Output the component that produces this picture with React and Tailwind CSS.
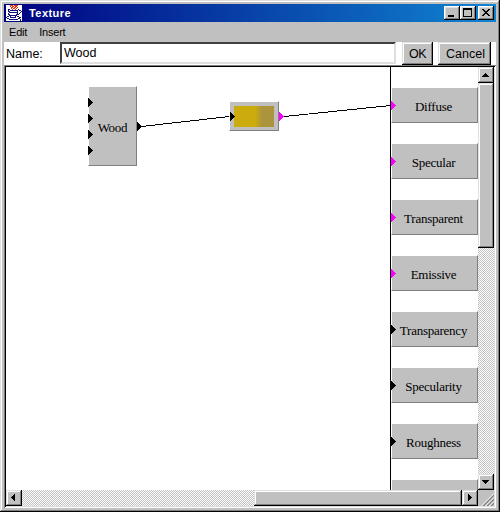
import React from "react";

const SANS = "font-['Liberation_Sans',Arial,sans-serif]";
const SERIF = "font-['Liberation_Serif','Times_New_Roman',serif]";
const RAISED =
  "bg-[#c0c0c0] shadow-[inset_-1px_-1px_#000,inset_1px_1px_#dfdfdf,inset_-2px_-2px_#808080,inset_2px_2px_#fff]";
const CAPTION =
  "bg-[#c0c0c0] shadow-[inset_-1px_-1px_#000,inset_1px_1px_#fff,inset_-2px_-2px_#808080,inset_2px_2px_#dfdfdf]";
const DITHER = "bg-[repeating-conic-gradient(#c0c0c0_0_25%,#fff_0_50%)] bg-[length:2px_2px]";

// One character per pixel on a white tile: r = steam, b = cup outline
const CUP = [
  "....rrr.rrrr....",
  "....r.rr.rr.....",
  ".....rr.rr.r....",
  ".....r.rr.r.....",
  "..bb..r..r..b...",
  "..b.bbbbbbbb.bb.",
  "..bb.......b...b",
  "...bbbbbbbbb..b.",
  "..b........b.b..",
  "..bb......bbb...",
  "...bbbbbbbb.....",
  ".bb.b....b.bb...",
  "b...bbbbbb...bb.",
  ".bb.........bb..",
  "...bbbbbbbbb..b.",
  "..............b.",
];
const INK = { r: "#e83018", b: "#101080" };

function JavaIcon() {
  return (
    <svg className="bg-white" width="16" height="16" viewBox="0 0 16 16" shapeRendering="crispEdges">
      {CUP.flatMap((row, y) =>
        [...row].map((c, x) =>
          INK[c] ? <rect key={`${x}-${y}`} x={x} y={y} width="1" height="1" fill={INK[c]} /> : null
        )
      )}
    </svg>
  );
}

const ARROWS = {
  up: "M7 6h1v1h1v1h1v1h1v1H4V9h1V8h1V7h1z",
  down: "M4 6h7v1h-1v1H9v1H8v1H7V9H6V8H5V7H4z",
  left: "M9 4v7H8v-1H7V9H6V8H5V7h1V6h1V5h1V4z",
  right: "M6 4v7h1v-1h1V9h1V8h1V7H9V6H8V5H7V4z",
};

function ScrollButton({ dir }) {
  return (
    <button className={`block size-4 shrink-0 ${RAISED}`}>
      <svg width="16" height="16" shapeRendering="crispEdges">
        <path d={ARROWS[dir]} />
      </svg>
    </button>
  );
}

function CaptionButton({ path, className = "" }) {
  return (
    <button className={`h-3.5 w-4 ${CAPTION} ${className}`}>
      <svg width="16" height="14" shapeRendering="crispEdges">
        <path d={path} fillRule="evenodd" />
      </svg>
    </button>
  );
}

function Port({ className, color = "#000" }) {
  return (
    <svg className={`absolute ${className}`} width="5" height="9" viewBox="0 0 5 9" shapeRendering="crispEdges">
      <path d="M0 0h1v1h1v1h1v1h1v1h1v1h-1v1h-1v1h-1v1h-1v1h-1z" fill={color} />
    </svg>
  );
}

const NODE = "border border-t-white border-l-white border-r-[#808080] border-b-[#808080] bg-[#c0c0c0]";

const OUTPUTS = [
  ["Diffuse", "#ff00ff", "top-5"],
  ["Specular", "#ff00ff", "top-[76px]"],
  ["Transparent", "#ff00ff", "top-[132px]"],
  ["Emissive", "#ff00ff", "top-[188px]"],
  ["Transparency", "#000", "top-[244px]"],
  ["Specularity", "#000", "top-[300px]"],
  ["Roughness", "#000", "top-[356px]"],
  ["", "#000", "top-[412px]"],
];

function Canvas() {
  return (
    <div className={`relative min-w-0 flex-1 overflow-hidden bg-white text-[13px] tracking-[-0.25px] ${SERIF}`}>
      <svg className="absolute inset-0" width="472" height="423" shapeRendering="crispEdges">
        <path d="M384.5 0V423M135.5 59.5L223.5 49.5M278.5 49.5L384.5 38.5" stroke="#000" fill="none" />
      </svg>
      <div className={`absolute top-[19px] left-[82px] flex h-20 w-[49px] items-center justify-center pt-1 ${NODE}`}>
        Wood
      </div>
      <Port className="top-[31px] left-[82px]" />
      <Port className="top-[47px] left-[82px]" />
      <Port className="top-[63px] left-[82px]" />
      <Port className="top-[79px] left-[82px]" />
      <Port className="top-[55px] left-[131px]" />
      <div className={`absolute top-[34px] left-[223px] h-[30px] w-[50px] p-1 ${NODE}`}>
        <div className="h-[21px] w-10 bg-[linear-gradient(90deg,#ccac0c_0_53%,#ac943c_70%)]" />
      </div>
      <Port className="top-[45px] left-[224px]" />
      <Port className="top-[45px] left-[273px]" color="#ff00ff" />
      {OUTPUTS.map(([label, color, top]) => (
        <div key={top} className={`absolute left-[385px] h-9 w-[87px] ${top}`}>
          <div className={`flex h-full items-center justify-center pt-1 pr-0.5 ${NODE}`}>{label}</div>
          <Port className="top-3.5 left-0" color={color} />
        </div>
      ))}
    </div>
  );
}

export default function App() {
  return (
    <div
      className={`h-[512px] w-[500px] overflow-hidden bg-[#c0c0c0] p-1 text-[11px] text-black shadow-[inset_-1px_-1px_#000,inset_1px_1px_#dfdfdf,inset_-2px_-2px_#808080,inset_2px_2px_#fff] ${SANS}`}
    >
      <div className="flex h-[18px] items-center bg-[linear-gradient(90deg,#000080,#1084d0)] pr-0.5 pl-0.5">
        <JavaIcon />
        <span className="ml-[7px] flex-1 text-[11px] font-bold tracking-[0.45px] text-white">Texture</span>
        <CaptionButton path="M4 9h6v2H4z" />
        <CaptionButton path="M3 2h9v9H3zM4 4v6h7V4z" />
        <CaptionButton
          className="ml-0.5"
          path="M4 3h2v1h1v1h2V4h1V3h2v1h-1v1h-1v1H9v1h1v1h1v1h1v1h-2V9H9V8H7v1H6v1H4V9h1V8h1V7h1V6H6V5H5V4H4z"
        />
      </div>
      <div className="flex h-5 items-center gap-3 pl-[5px] tracking-[-0.2px]">
        <span>Edit</span>
        <span>Insert</span>
      </div>
      <div className="flex h-[23px] bg-white text-[13px] leading-[23px]">
        <span className="w-14 pt-px pl-0.5 text-[12.5px]">Name:</span>
        <div className="h-[22px] w-[336px] border-2 border-t-[#404040] border-r-[#dfdfdf] border-b-[#dfdfdf] border-l-[#404040] pl-0.5 text-[12.5px] leading-[19px]">
          Wood
        </div>
        <button className={`ml-1.5 h-[23px] w-[31px] pt-px text-[12.5px] tracking-[-0.5px] ${RAISED}`}>OK</button>
        <button className={`ml-[5px] h-[23px] w-[53px] pt-px pl-0.5 text-[12.5px] ${RAISED}`}>Cancel</button>
      </div>
      <div className="flex h-[443px] flex-col p-0.5 shadow-[inset_1px_1px_#808080,inset_-1px_-1px_#fff,inset_2px_2px_#000,inset_-2px_-2px_#dfdfdf]">
        <div className="flex h-[423px]">
          <Canvas />
          <div className={`flex w-4 flex-col ${DITHER}`}>
            <ScrollButton dir="up" />
            <div className={`h-[165px] ${RAISED}`} />
            <div className="flex-1" />
            <ScrollButton dir="down" />
          </div>
        </div>
        <div className="flex h-4">
          <div className={`flex w-[472px] ${DITHER}`}>
            <ScrollButton dir="left" />
            <div className="flex-1" />
            <div className={`w-[208px] ${RAISED}`} />
            <ScrollButton dir="right" />
          </div>
          <svg width="16" height="16">
            <path d="M5 16L16 5M9 16L16 9M13 16L16 13" stroke="#808080" strokeWidth="1.5" />
            <path d="M3.5 16L16 3.5M7.5 16L16 7.5M11.5 16L16 11.5" stroke="#fff" />
          </svg>
        </div>
      </div>
    </div>
  );
}
